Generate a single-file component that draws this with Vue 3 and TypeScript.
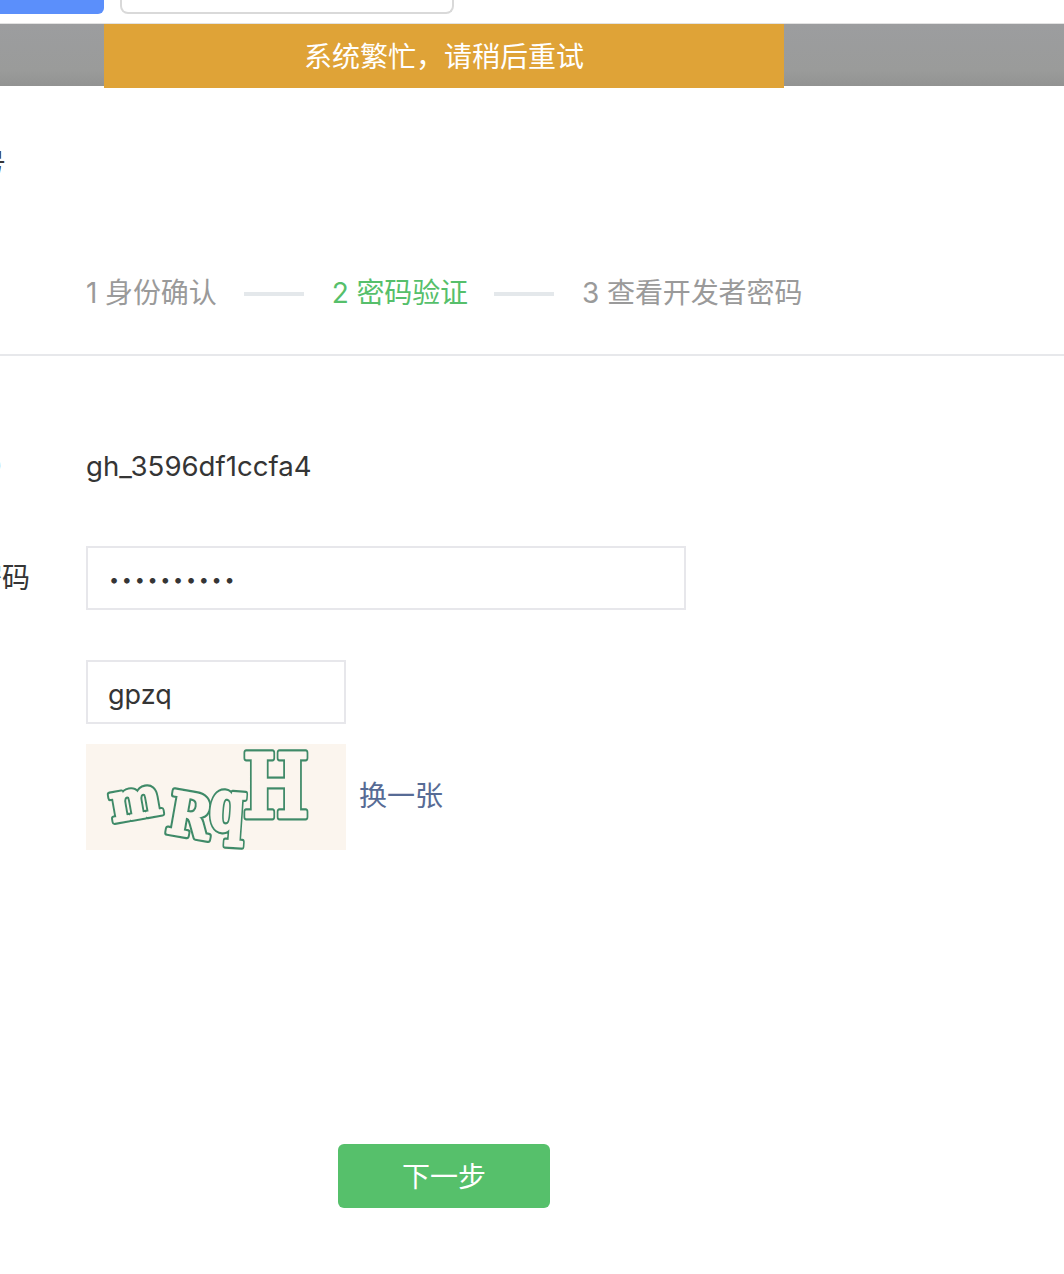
<script setup lang="ts">
interface Step { label: string; active?: boolean }
interface Glyph { ch: string; size: number; transform: string }
const steps: Step[] = [
  { label: '1 身份确认' },
  { label: '2 密码验证', active: true },
  { label: '3 查看开发者密码' },
]
const glyphs: Glyph[] = [
  { ch: 'm', size: 56, transform: 'translate(27 78) rotate(-10) scale(0.86 0.94)' },
  { ch: 'R', size: 58, transform: 'translate(79 88) rotate(10) scale(0.9 1)' },
  { ch: 'q', size: 72, transform: 'translate(122 85) rotate(4) scale(0.72 1)' },
  { ch: 'H', size: 88, transform: 'translate(157 73) scale(0.79 1)' },
]
</script>

<template>
  <div class="page">
    <div class="top">
      <div class="top-btn"></div>
      <div class="top-input"></div>
    </div>
    <div class="bar">
      <div class="toast">系统繁忙，请稍后重试</div>
    </div>
    <div class="heading">公众号</div>
    <div class="steps">
      <template v-for="(s, i) in steps" :key="s.label">
        <span class="line" v-if="i > 0"></span>
        <span class="step" :class="{ active: s.active }">{{ s.label }}</span>
      </template>
    </div>
    <div class="rule"></div>
    <div class="form">
      <div class="row">
        <span class="label">原始ID</span>
        <span class="value">gh_3596df1ccfa4</span>
      </div>
      <div class="row row-pass">
        <span class="label">登录密码</span>
        <input class="field field-long pass" type="password" value="1234567890" readonly />
      </div>
      <div class="row row-code">
        <span class="label"></span>
        <input class="field field-short" type="text" value="gpzq" readonly />
      </div>
      <div class="row row-captcha">
        <span class="label"></span>
        <svg class="captcha" width="260" height="106" viewBox="0 0 260 106">
          <g class="cap cap-outer">
            <text v-for="g in glyphs" :key="g.ch" :transform="g.transform" :font-size="g.size">{{ g.ch }}</text>
          </g>
          <g class="cap cap-inner">
            <text v-for="g in glyphs" :key="g.ch" :transform="g.transform" :font-size="g.size">{{ g.ch }}</text>
          </g>
        </svg>
        <a class="refresh">换一张</a>
      </div>
    </div>
    <div class="actions">
      <button class="next" type="button">下一步</button>
    </div>
  </div>
</template>

<style>
html, body { margin: 0; background: #fff; overflow-x: hidden; }
</style>

<style scoped>
.page {
  width: 1064px;
  height: 1274px;
  overflow: hidden;
  background: #fff;
  color: #353535;
  font-family: Inter, "Noto Sans CJK SC", sans-serif;
  font-size: 28px;
}
.top {
  height: 23px;
  display: flex;
  gap: 16px;
  align-items: flex-start;
  border-bottom: 1px solid #e2e2e2;
}
.top-btn {
  width: 104px;
  height: 14px;
  background: #5b8ffb;
  border-bottom-right-radius: 6px;
}
.top-input {
  width: 330px;
  height: 12px;
  background: #fff;
  border: 2px solid #d9d9d9;
  border-top: 0;
  border-radius: 0 0 8px 8px;
}
.bar {
  position: relative;
  height: 62px;
  background: linear-gradient(#9c9d9f, #9a9b9a 75%, #929392);
}
.toast {
  position: absolute;
  left: 104px;
  top: 0;
  width: 680px;
  height: 64px;
  line-height: 62px;
  text-align: center;
  background: #dfa337;
  color: #fff;
  font-family: "Noto Sans CJK SC", sans-serif;
}
.heading {
  margin: 56px 0 0 -78px;
  height: 38px;
  line-height: 40px;
  font-family: "Noto Sans CJK SC", sans-serif;
}
.steps {
  margin-top: 92px;
  padding-left: 86px;
  height: 40px;
  display: flex;
  align-items: center;
  color: #9a9a9a;
  white-space: nowrap;
}
.step { padding-bottom: 2px; letter-spacing: -0.1px; }
.step.active { color: #56bf6b; }
.line {
  width: 60px;
  height: 4px;
  margin: 4px 28px 0 27px;
  background: #e4e8eb;
}
.step.active + .line { margin-left: 26px; }
.rule {
  margin-top: 42px;
  height: 2px;
  background: #e7e8eb;
}
.form {
  padding-top: 78px;
}
.row {
  display: flex;
  align-items: center;
  height: 64px;
  margin-left: -82px;
}
.label {
  flex: 0 0 168px;
  font-family: "Noto Sans CJK SC", sans-serif;
  white-space: nowrap;
  padding-bottom: 4px;
}
.value { font-size: 27.6px; }
.row-pass { margin-top: 48px; }
.row-code { margin-top: 50px; }
.row-captcha {
  margin-top: 20px;
  height: 106px;
}
.field {
  box-sizing: border-box;
  height: 64px;
  padding: 4px 20px 0;
  border: 2px solid #e7e7eb;
  border-radius: 0;
  outline: none;
  background: #fff;
  color: #353535;
  font-family: Inter, sans-serif;
  font-size: 27px;
}
.field-long { width: 600px; }
.field-short { width: 260px; }
.pass { font-size: 18px; letter-spacing: 2.7px; padding: 3px 21px 0; }
.captcha {
  display: block;
  background: #fbf5ee;
  flex: none;
}
.cap {
  font-family: "DejaVu Serif", serif;
  font-weight: 700;
  stroke-linejoin: round;
}
.cap-outer {
  fill: #3f8a68;
  stroke: #3f8a68;
  stroke-width: 7px;
  filter: blur(0.7px);
}
.cap-inner {
  fill: #fbf5ee;
  stroke: #fbf5ee;
  stroke-width: 2.5px;
  filter: blur(0.5px);
}
.refresh {
  margin: 0 0 6px 13px;
  color: #576b95;
  font-family: "Noto Sans CJK SC", sans-serif;
}
.actions {
  margin-top: 294px;
  width: 888px;
  display: flex;
  justify-content: center;
}
.next {
  width: 212px;
  height: 64px;
  border: 0;
  border-radius: 6px;
  background: #56c06b;
  color: #fff;
  font-family: "Noto Sans CJK SC", sans-serif;
  font-size: 28px;
  padding: 0 0 2px;
}
</style>
